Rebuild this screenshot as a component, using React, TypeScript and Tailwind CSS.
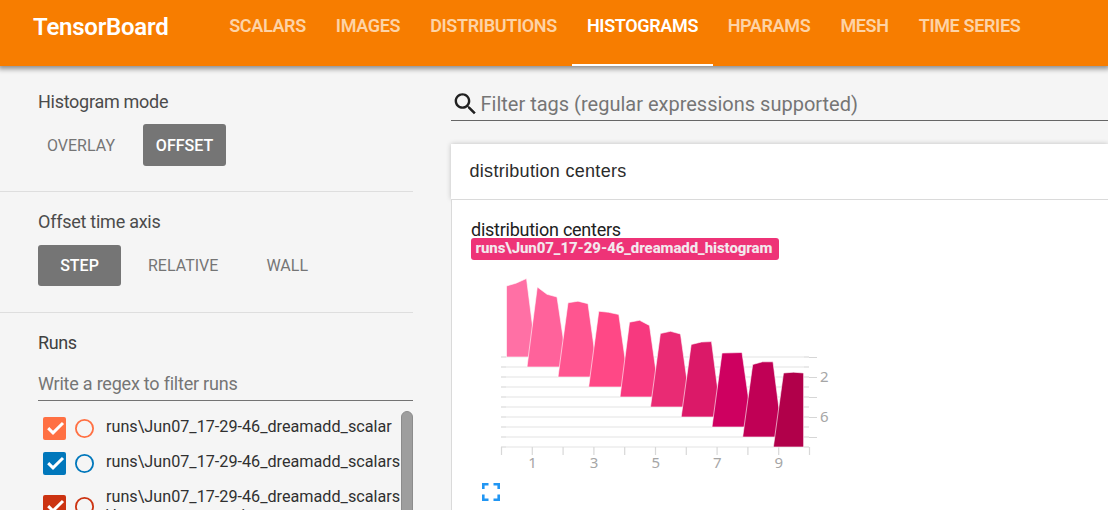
import React from "react";

const tabs: { label: string; x: string; active?: boolean }[] = [
  { label: "SCALARS", x: "w-[107px]" },
  { label: "IMAGES", x: "w-[94px]" },
  { label: "DISTRIBUTIONS", x: "w-[157px]" },
  { label: "HISTOGRAMS", x: "w-[141px]", active: true },
  { label: "HPARAMS", x: "w-[112px]" },
  { label: "MESH", x: "w-[79px]" },
  { label: "TIME SERIES", x: "w-[131px]" },
];

const runs = [
  { name: "runs\\Jun07_17-29-46_dreamadd_scalar", color: "#ff7043", row: "h-[35px]" },
  { name: "runs\\Jun07_17-29-46_dreamadd_scalars", color: "#0077bb", row: "h-[35px]" },
  { name: "runs\\Jun07_17-29-46_dreamadd_scalars\\loss_accuracy_train", color: "#cc3311", row: "h-[51px]" },
];

const series = [
  { fill: "#ff70a5", points: "506.5,357 506.5,286 516,283.2 526.5,278.5 532,322 537,357" },
  { fill: "#ff629b", points: "527,367 537.3,287 547,294.3 557,297 563,337 568,367" },
  { fill: "#ff5590", points: "558,377 568,302.8 578,301.2 588,303.7 594,347 599,377" },
  { fill: "#ff4886", points: "588.7,387 598.8,311.2 608.5,312.3 618.8,314.5 624.5,355 630,387" },
  { fill: "#f7397f", points: "620,397 629.5,322.2 639.6,320.3 649.5,325.5 655.5,368 661,397" },
  { fill: "#e92b74", points: "650.5,407 660.4,333.5 670.5,331.3 680.5,334 686.5,377 692,407" },
  { fill: "#db1968", points: "681.2,417 691.2,344.5 701.5,342 711.5,341.6 717,384 722,417" },
  { fill: "#ce0060", points: "712,427 722,353 732,352.8 742,352.5 748,395 753,427" },
  { fill: "#c00055", points: "742.7,437 752.7,364.5 762.5,361.8 773,361.8 778.5,405 784,437" },
  { fill: "#b1004a", points: "773.4,447 783.5,373 793.5,372.2 803.6,373 803.6,447" },
];

function Header() {
  return (
    <header className="relative z-10 flex h-[66px] shrink-0 bg-[#f77d00] shadow-[0_1px_5px_2px_rgba(0,0,0,0.42)]">
      <div className="w-[214px] pl-[33px] pt-[10px] text-[24px] leading-[34px] font-semibold tracking-[-0.25px] text-white">
        TensorBoard
      </div>
      <nav className="flex">
        {tabs.map((t) => (
          <div
            key={t.label}
            className={`${t.x} flex shrink-0 justify-center border-b-2 pt-[13px] text-[18px] leading-[26px] font-semibold tracking-[-0.35px] whitespace-nowrap ${
              t.active ? "border-white text-white" : "border-transparent text-[#fdd3a6]"
            }`}
          >
            {t.label}
          </div>
        ))}
      </nav>
    </header>
  );
}

function Sidebar() {
  return (
    <aside className="flex w-[413px] shrink-0 flex-col text-[18px] text-[#4b4b4b]">
      <section className="h-[126px] shrink-0 border-b border-[#dedede] pt-[24px] pl-[38px]">
        <h3 className="leading-[24px] tracking-[-0.28px]">Histogram mode</h3>
        <div className="mt-[10px] flex h-[42px] text-[16px] leading-[43px]">
          <div className="w-[105px] pl-[9px] text-[#757575]">OVERLAY</div>
          <div className="w-[83px] rounded-[3px] bg-[#757575] text-center font-medium text-white">OFFSET</div>
        </div>
      </section>
      <section className="h-[121px] shrink-0 border-b border-[#dedede] pt-[18px] pl-[38px]">
        <h3 className="leading-[24px] tracking-[-0.25px]">Offset time axis</h3>
        <div className="mt-[11px] flex h-[41px] text-[16px] leading-[41px]">
          <div className="w-[83px] rounded-[3px] bg-[#757575] text-center font-medium text-white">STEP</div>
          <div className="w-[119px] pl-[27px] text-[#757575]">RELATIVE</div>
          <div className="text-[#757575]">
            <span className="pl-[26.5px]">WALL</span>
          </div>
        </div>
      </section>
      <section className="flex min-h-0 flex-1 flex-col pt-[18px] pl-[38px]">
        <h3 className="leading-[24px] tracking-[-0.4px] text-[#404040]">Runs</h3>
        <div className="mt-[16px] h-[30px] shrink-0 border-b border-[#737373] text-[18px] leading-[26px] tracking-[-0.22px] text-[#757575]">
          Write a regex to filter runs
        </div>
        <div className="flex min-h-0 flex-1 overflow-hidden pt-[10px] pl-[5px]">
          <div className="w-[358px] shrink-0">
            {runs.map((r) => (
              <div key={r.name} className={`${r.row} flex items-center`}>
                <svg className="size-[23px] shrink-0" viewBox="0 0 23 23">
                  <rect width="23" height="23" rx="2" fill={r.color} />
                  <path d="M5.2 11.2 L10 15.8 L20 6" fill="none" stroke="#fff" strokeWidth="3" />
                </svg>
                <svg className="ml-[9px] size-[19px] shrink-0" viewBox="0 0 19 19">
                  <circle cx="9.5" cy="9.5" r="8.6" fill="none" stroke={r.color} strokeWidth="1.8" />
                </svg>
                <div className="ml-[12px] w-[295px] shrink-0 self-start pt-[6px] text-[16.2px] leading-[19px] break-all text-[#303030]">
                  {r.name}
                </div>
              </div>
            ))}
          </div>
          <div className="h-[200px] w-[12px] shrink-0 rounded-[6px] border border-[#8c8c8c] bg-[#9e9e9e]" />
        </div>
      </section>
    </aside>
  );
}

function HistogramChart() {
  const rows = series.map((_, i) => 357 + i * 10);
  return (
    <svg className="block h-[200px] w-[400px]" viewBox="471 272 400 200">
      {rows.map((y, i) => (
        <g key={y}>
          <path d={`M501 ${y}H809`} stroke="#f1f1f1" strokeWidth="2" />
          <path d={`M501 ${y}H506M804 ${y}H809`} stroke="#e9e9e9" strokeWidth="2" />
          {i % 2 === 0 && <path d={`M809 ${y + 0.5}H817`} stroke="#d6d6d6" />}
        </g>
      ))}
      {series.map((_, i) => (
        <path key={i} d={`M${501.5 + i * 30.8} 447V455`} stroke="#d8d8d8" strokeWidth="1.2" />
      ))}
      <path d="M809.5 447V455" stroke="#d8d8d8" strokeWidth="1.2" />
      {series.map((s) => (
        <polygon key={s.fill} points={s.points} fill={s.fill} stroke="#fff" strokeOpacity="0.6" strokeWidth="1" />
      ))}
      <g className="fill-[#a6a6a6] font-['Noto_Sans',sans-serif] text-[15px]" textAnchor="middle">
        {[1, 3, 5, 7, 9].map((n) => (
          <text key={n} x={501.7 + n * 30.8} y="468">
            {n}
          </text>
        ))}
        <text x="824.3" y="382">2</text>
        <text x="824.3" y="422">6</text>
      </g>
    </svg>
  );
}

function Main() {
  return (
    <main className="ml-[38px] flex min-w-0 flex-1 flex-col pt-[25px]">
      <div className="flex h-[30px] shrink-0 border-b border-[#666]">
        <svg className="size-[29px] shrink-0 -translate-y-[1.5px]" viewBox="0 0 24 24" fill="#212121">
          <path d="M15.5 14h-.79l-.28-.27C15.41 12.59 16 11.11 16 9.5 16 5.91 13.09 3 9.5 3S3 5.91 3 9.5 5.91 16 9.5 16c1.61 0 3.09-.59 4.23-1.57l.27.28v.79l5 4.99L20.49 19l-4.99-5zm-6 0C7.01 14 5 11.99 5 9.5S7.01 5 9.5 5 14 7.01 14 9.5 11.99 14 9.5 14z" />
        </svg>
        <div className="pl-[0.5px] text-[20px] leading-[26px] text-[#757575]">
          Filter tags (regular expressions supported)
        </div>
      </div>
      <div className="mt-[23px] flex h-[55px] shrink-0 items-center bg-white pl-[18.5px] text-[18px] tracking-[0.3px] text-[#2b2b2b] shadow-[0_0_5px_rgba(0,0,0,0.22)]">
        <span className="font-['Liberation_Sans',Arial,sans-serif]">distribution centers</span>
      </div>
      <div className="relative flex-1 border-t border-l border-[#dadada] bg-white pt-[20px] pl-[19px]">
        <div className="h-[18px] text-[18px] leading-[20px] tracking-[-0.25px] text-[#212121]">distribution centers</div>
        <div className="h-[22px] w-[308px] rounded-[3px] bg-[#ee3377] pl-[4.5px] text-[15px] leading-[20px] font-extrabold tracking-[-0.08px] whitespace-nowrap text-[#f3e8ed]">
          runs\Jun07_17-29-46_dreamadd_histogram
        </div>
        <div className="mt-[12px]">
          <HistogramChart />
        </div>
        <svg className="mt-[11px] ml-[11px] size-[18px]" viewBox="0 0 18 18" fill="none" stroke="#2196f3" strokeWidth="2.6">
          <path d="M1.3 6V1.3H6.5M11.5 1.3H16.7V6M16.7 11.5V16.7H11.5M6.5 16.7H1.3V11.5" />
        </svg>
      </div>
    </main>
  );
}

export default function App() {
  return (
    <div className="flex h-[510px] w-[1108px] flex-col overflow-hidden bg-[#f5f5f5] font-[Roboto,sans-serif]">
      <Header />
      <div className="flex min-h-0 flex-1">
        <Sidebar />
        <Main />
      </div>
    </div>
  );
}
